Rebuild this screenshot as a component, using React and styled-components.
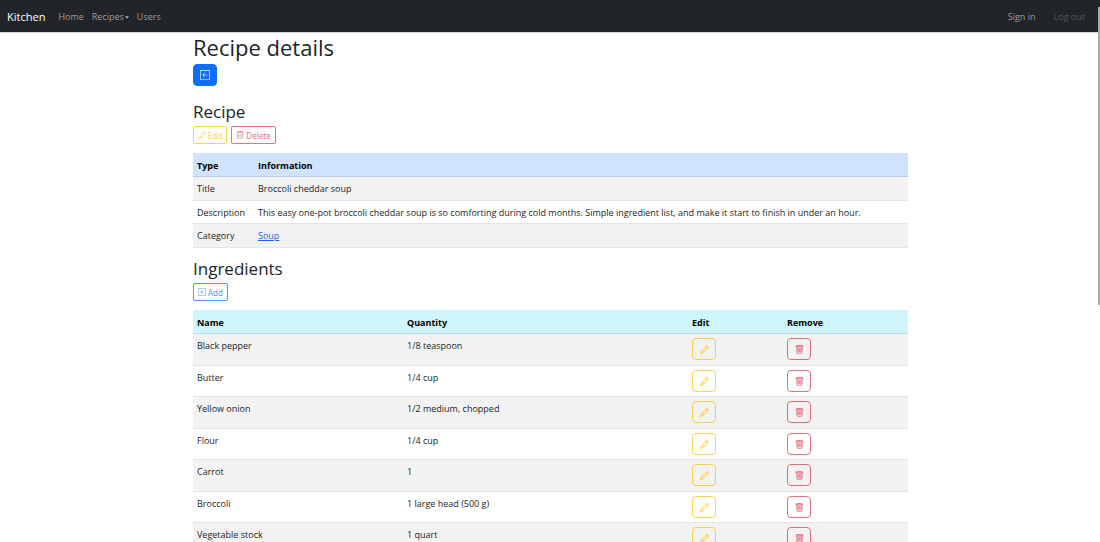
import React from "react";
import styled, { createGlobalStyle } from "styled-components";
import { BsPencil, BsTrash, BsArrowLeftSquare, BsPlusSquare } from "react-icons/bs";

const GlobalStyle = createGlobalStyle`
  *, *::before, *::after { box-sizing: border-box; }
  html { scrollbar-width: none; }
  body {
    margin: 0;
    background: #fff;
    color: #212529;
    font-family: "Open Sans", "Noto Sans", sans-serif;
    font-size: 9px;
    line-height: 14px;
  }
`;

const Navbar = styled.nav`
  display: flex;
  align-items: center;
  height: 32px;
  padding: 2px 15px 0 7px;
  background: #212529;
  box-shadow: 0 1px 1px rgba(0, 0, 0, 0.15);
`;

const Brand = styled.a`
  margin-right: 13px;
  color: #fff;
  font-size: 11px;
  text-decoration: none;
`;

const NavLinks = styled.div`
  display: flex;
  gap: ${(p) => p.$gap};
  margin-left: ${(p) => (p.$end ? "auto" : "0")};
`;

const NavLink = styled.a`
  display: flex;
  align-items: center;
  gap: 1px;
  color: ${(p) => (p.$disabled ? "#56595c" : "#9b9d9e")};
  text-decoration: none;
`;

const Caret = styled.span`
  border: 2px solid transparent;
  border-top: 3px solid currentColor;
  border-bottom: 0;
`;

const Container = styled.main`
  max-width: 716px;
  margin: 0 auto;
  padding-left: 1px;
`;

const PageTitle = styled.h1`
  margin: 0 0 1px;
  font-size: 22px;
  font-weight: 400;
  line-height: 31px;
`;

const Section = styled.section`
  padding-top: ${(p) => p.$space};
`;

const SectionTitle = styled.h2`
  margin: 0 0 4px;
  font-size: 17px;
  font-weight: 400;
  line-height: 20px;
`;

const tones = { primary: "#0d6efd", warning: "#ffc107", danger: "#dc3545" };

const Button = styled.button`
  display: inline-flex;
  align-items: center;
  justify-content: center;
  gap: 2px;
  height: 18px;
  padding: 0 4px;
  border: 1px solid ${(p) => tones[p.$tone]};
  border-radius: 2px;
  background: transparent;
  color: ${(p) => tones[p.$tone]};
  font-family: "Noto Sans", sans-serif;
  font-size: 8px;
  opacity: 0.7;
  svg { width: 8px; height: 8px; }
`;

const IconButton = styled(Button)`
  display: flex;
  width: 24px;
  height: 22px;
  padding: 0;
  border-radius: 4px;
  background: ${(p) => (p.$solid ? tones[p.$tone] : "transparent")};
  color: ${(p) => (p.$solid ? "#fff" : tones[p.$tone])};
  opacity: ${(p) => (p.$solid ? 1 : 0.7)};
  svg { width: 10px; height: 10px; }
  td & svg { width: 9px; height: 9px; stroke: currentColor; stroke-width: 0.5; }
`;

const Actions = styled.div`
  display: flex;
  gap: 4px;
  margin-bottom: 9px;
`;

const Table = styled.table`
  width: 100%;
  border-collapse: separate;
  border-spacing: 0;
  table-layout: fixed;
`;

const HeadCell = styled.th`
  width: ${(p) => p.$width || "auto"};
  height: 24px;
  padding: 2px 4px 0;
  border-bottom: 1px solid ${(p) => (p.$tint === "info" ? "#badce3" : "#bacbe6")};
  background: ${(p) => (p.$tint === "info" ? "#cff4fc" : "#cfe2ff")};
  color: #000;
  font-weight: 700;
  text-align: left;
`;

const Cell = styled.td`
  padding: ${(p) => (p.$action ? "4px" : "5px 4px 3px")};
  border-bottom: 1px solid #e3e5e7;
  vertical-align: top;
`;

const Row = styled.tr`
  height: ${(p) => (p.$tall ? "31px" : "23px")};
  &:nth-child(odd) {
    height: ${(p) => (p.$tall ? "32px" : "24px")};
    background: #f2f2f2;
  }
`;

const TextLink = styled.a`
  color: #0d6efd;
`;

const ScrollThumb = styled.div`
  position: fixed;
  top: 7px;
  right: 0;
  width: 2px;
  height: 55%;
  background: #a9a9a9;
`;

const ingredients = [
  ["Black pepper", "1/8 teaspoon"],
  ["Butter", "1/4 cup"],
  ["Yellow onion", "1/2 medium, chopped"],
  ["Flour", "1/4 cup"],
  ["Carrot", "1"],
  ["Broccoli", "1 large head (500 g)"],
  ["Vegetable stock", "1 quart"],
];

const details = [
  ["Title", "Broccoli cheddar soup"],
  [
    "Description",
    "This easy one-pot broccoli cheddar soup is so comforting during cold months. Simple ingredient list, and make it start to finish in under an hour.",
  ],
  ["Category", <TextLink href="#soup">Soup</TextLink>],
];

export default function App() {
  return (
    <>
      <GlobalStyle />
      <Navbar>
        <Brand href="#">Kitchen</Brand>
        <NavLinks $gap="8px">
          <NavLink href="#home">Home</NavLink>
          <NavLink href="#recipes">Recipes<Caret /></NavLink>
          <NavLink href="#users">Users</NavLink>
        </NavLinks>
        <NavLinks $gap="18px" $end>
          <NavLink href="#signin">Sign in</NavLink>
          <NavLink href="#logout" $disabled>Log out</NavLink>
        </NavLinks>
      </Navbar>
      <Container>
        <PageTitle>Recipe details</PageTitle>
        <IconButton $tone="primary" $solid aria-label="Back"><BsArrowLeftSquare /></IconButton>
        <Section $space="16px">
          <SectionTitle>Recipe</SectionTitle>
          <Actions>
            <Button $tone="warning"><BsPencil />Edit</Button>
            <Button $tone="danger"><BsTrash />Delete</Button>
          </Actions>
          <Table>
            <thead>
              <tr>
                <HeadCell $width="61px">Type</HeadCell>
                <HeadCell>Information</HeadCell>
              </tr>
            </thead>
            <tbody>
              {details.map(([type, info]) => (
                <Row key={type}>
                  <Cell>{type}</Cell>
                  <Cell>{info}</Cell>
                </Row>
              ))}
            </tbody>
          </Table>
        </Section>
        <Section $space="11px">
          <SectionTitle>Ingredients</SectionTitle>
          <Actions>
            <Button $tone="primary"><BsPlusSquare />Add</Button>
          </Actions>
          <Table>
            <thead>
              <tr>
                <HeadCell $tint="info" $width="210px">Name</HeadCell>
                <HeadCell $tint="info" $width="285px">Quantity</HeadCell>
                <HeadCell $tint="info" $width="95px">Edit</HeadCell>
                <HeadCell $tint="info">Remove</HeadCell>
              </tr>
            </thead>
            <tbody>
              {ingredients.map(([name, quantity]) => (
                <Row key={name} $tall>
                  <Cell>{name}</Cell>
                  <Cell>{quantity}</Cell>
                  <Cell $action><IconButton $tone="warning" aria-label={`Edit ${name}`}><BsPencil /></IconButton></Cell>
                  <Cell $action><IconButton $tone="danger" aria-label={`Remove ${name}`}><BsTrash /></IconButton></Cell>
                </Row>
              ))}
            </tbody>
          </Table>
        </Section>
      </Container>
      <ScrollThumb />
    </>
  );
}
